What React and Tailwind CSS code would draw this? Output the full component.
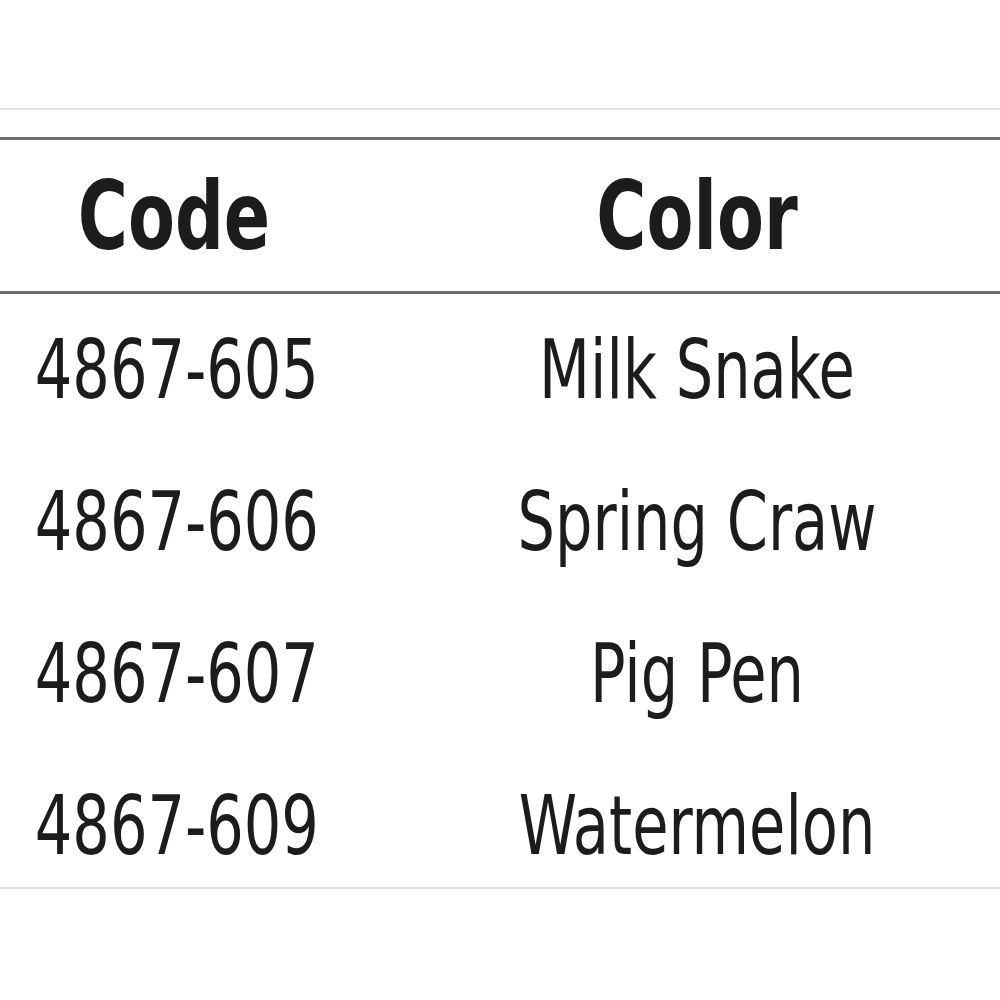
const rows = [
  { code: '4867-605', color: 'Milk Snake' },
  { code: '4867-606', color: 'Spring Craw' },
  { code: '4867-607', color: 'Pig Pen' },
  { code: '4867-609', color: 'Watermelon' },
]

const font = { fontFamily: '"DejaVu Sans Condensed", "DejaVu Sans", sans-serif' }

export default function App() {
  return (
    <div className="w-[1000px] h-[1000px] bg-white pt-[108px] text-[#1c1c1c] overflow-hidden" style={font}>
      <div className="h-[2px] bg-[#e4e4e4]" />
      <div className="h-[27px]" />
      <div className="h-[3px] bg-[#6e6e6e]" />

      {/* header */}
      <div className="grid grid-cols-[348px_1fr] gap-x-[46px] pt-[29px] pb-[27px]">
        <div className="text-center text-[95px] leading-none font-bold whitespace-nowrap scale-x-[0.8]">Code</div>
        <div className="text-center text-[95px] leading-none font-bold whitespace-nowrap scale-x-[0.8]">Color</div>
      </div>
      <div className="h-[3px] bg-[#6e6e6e]" />

      <div>
        {rows.map(r => (
          <div
            key={r.code}
            className="grid grid-cols-[348px_1fr] gap-x-[46px] pt-[35px] pb-[35px] last:pb-[20px]"
          >
            <div className="text-center text-[82px] leading-none whitespace-nowrap scale-x-[0.8]">{r.code}</div>
            <div className="text-center text-[82px] leading-none whitespace-nowrap scale-x-[0.8]">{r.color}</div>
          </div>
        ))}
      </div>
      <div className="h-[2px] bg-[#e0e0e0]" />
    </div>
  )
}
